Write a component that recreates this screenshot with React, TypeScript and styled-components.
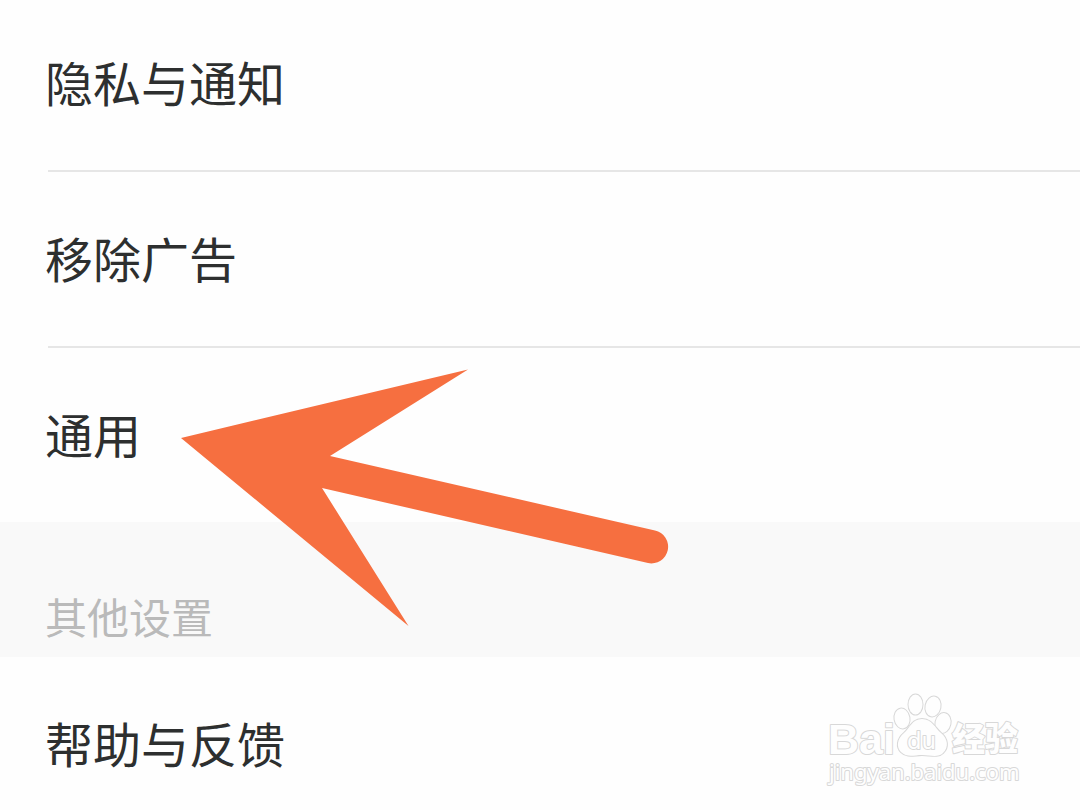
import React from "react";
import styled, { createGlobalStyle } from "styled-components";

const GlobalStyle = createGlobalStyle`
  * { box-sizing: border-box; }
  body {
    margin: 0;
    background: #fefefe;
    font-family: "Noto Sans CJK SC", "Noto Sans", sans-serif;
  }
`;

const Page = styled.main`
  position: relative;
  overflow: hidden;
`;

const List = styled.ul`
  margin: 0;
  padding: 0;
  list-style: none;
`;

const Item = styled.li<{ $divided?: boolean }>`
  margin-left: 48px;
  border-bottom: ${(p) => (p.$divided ? "2px solid #e6e6e6" : "0")};
`;

const RowButton = styled.button<{ $edge?: "top" | "bottom" }>`
  display: block;
  width: 100%;
  margin: 0;
  padding: ${(p) => (p.$edge === "top" ? 45 : 49)}px 0 ${(p) => (p.$edge === "bottom" ? 32 : 53)}px;
  border: 0;
  background: none;
  color: #2d2f2f;
  font: inherit;
  font-size: 48px;
  line-height: 72px;
  text-align: left;
  text-indent: -3px;
  cursor: pointer;
`;

const SectionTitle = styled.h2`
  margin: 0;
  padding: 62px 45px 9px;
  background: #f9f9f9;
  color: #bababa;
  font-size: 42px;
  font-weight: 400;
  line-height: 64px;
`;

const Arrow = styled.svg`
  position: absolute;
  left: 180px;
  top: 368px;
  pointer-events: none;
`;

const Watermark = styled.svg`
  position: absolute;
  right: 50px;
  bottom: 18px;
  pointer-events: none;
  fill: #fefefe;
  stroke: #d8d8d8;
  stroke-width: 2px;
  stroke-linejoin: round;
  paint-order: stroke;
`;

export default function App() {
  return (
    <Page>
      <GlobalStyle />
      <List>
        <Item $divided>
          <RowButton $edge="top">隐私与通知</RowButton>
        </Item>
        <Item $divided>
          <RowButton>移除广告</RowButton>
        </Item>
        <Item>
          <RowButton>通用</RowButton>
        </Item>
      </List>
      <SectionTitle>其他设置</SectionTitle>
      <List>
        <Item>
          <RowButton $edge="bottom">帮助与反馈</RowButton>
        </Item>
      </List>
      <Arrow width="490" height="260" viewBox="180 368 490 260" aria-hidden="true">
        <path
          d="M181 438 L468 369.500 L330 456 L655 530.500 A16.500 16.500 0 0 1 648 563 L322 488 L408.500 626 Z"
          fill="#f66f40"
        />
      </Arrow>
      <Watermark width="210" height="106" viewBox="820 686 210 106" aria-label="Baidu">
        <text x="828" y="754" fontFamily="Liberation Sans" fontWeight="700" fontSize="43">
          Bai
        </text>
        <ellipse cx="902" cy="718.500" rx="7.500" ry="10" transform="rotate(-10 902 718.500)" />
        <ellipse cx="915.500" cy="704.500" rx="7" ry="10" />
        <ellipse cx="933" cy="706.500" rx="7.500" ry="10" transform="rotate(12 933 706.500)" />
        <ellipse cx="943" cy="723" rx="7.500" ry="10" transform="rotate(12 943 723)" />
        <path d="M922 719 C912 719 910 728 904 733 C897 739 896 747 901 752 C907 758 914 755 922 755 C930 755 938 758 943 753 C949 747 948 739 941 733 C935 728 932 719 922 719 Z" />
        <text x="907" y="749" fontFamily="DejaVu Sans" fontSize="23">
          du
        </text>
        <text x="952" y="751" fontFamily="Noto Sans CJK SC" fontWeight="900" fontSize="33">
          经验
        </text>
        <text x="829" y="780" fontFamily="Noto Sans" fontWeight="400" fontSize="22">
          jingyan.baidu.com
        </text>
      </Watermark>
    </Page>
  );
}
